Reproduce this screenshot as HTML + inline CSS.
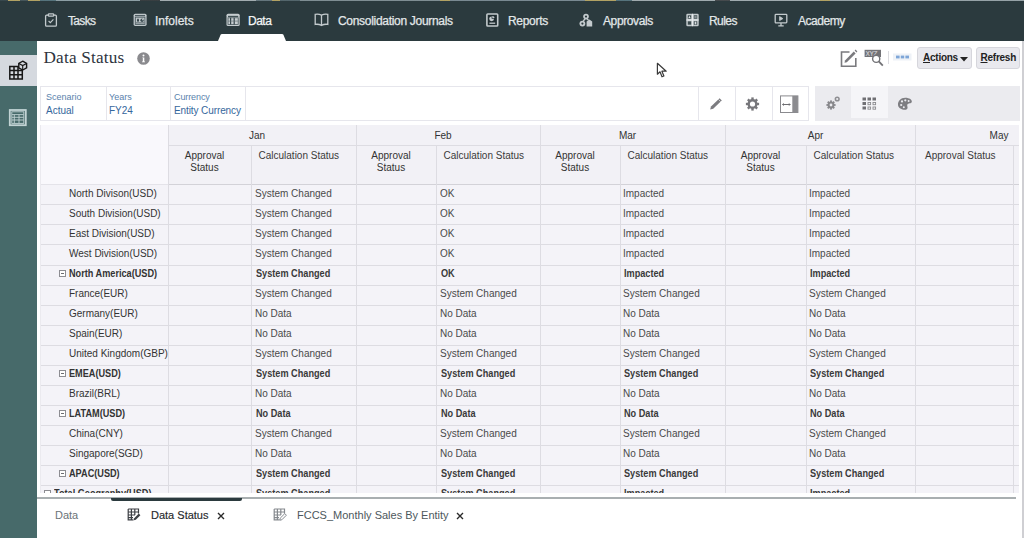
<!DOCTYPE html>
<html><head><meta charset="utf-8">
<style>
*{margin:0;padding:0;box-sizing:border-box}
html,body{width:1024px;height:538px;overflow:hidden;background:#fff;font-family:"Liberation Sans",sans-serif}
.abs{position:absolute}
#nav{left:0;top:0;width:1024px;height:41px;background:#2b3a3e}
#topstrip{left:0;top:0;width:1024px;height:1px;opacity:0.85;background:linear-gradient(90deg,#3a4a50 0,#3a4a50 8px,#c9b46a 8px,#c9b46a 20px,#4a5a60 20px,#4a5a60 28px,#c9b46a 28px,#c9b46a 40px,#5d7e88 40px,#5d7e88 56px,#9fb1b8 56px,#9fb1b8 140px,#3b3f42 140px,#3b3f42 160px,#b7c0c4 160px,#b7c0c4 256px,#6f8088 256px,#6f8088 272px,#c9b46a 272px,#c9b46a 280px,#5b6d74 280px,#5b6d74 300px,#8d9ca2 300px,#8d9ca2 440px,#c9b46a 440px,#c9b46a 450px,#8797a0 450px,#8797a0 585px,#c9b46a 585px,#c9b46a 616px,#5d7e88 616px,#5d7e88 632px,#b4bec2 632px,#b4bec2 715px,#4a4d50 715px,#4a4d50 730px,#b4bec2 730px,#b4bec2 820px,#c9b46a 820px,#c9b46a 830px,#a8b4b9 830px,#a8b4b9 1024px)}
.ni{position:absolute;top:1px;height:41px;color:#e3e8e9;-webkit-text-stroke:0.25px #e3e8e9;font-size:12px;letter-spacing:-0.3px;line-height:41px;white-space:nowrap}
#datatab{left:218px;top:34px;width:68px;height:7px}
#side{left:0;top:41px;width:37px;height:497px;background:#476a6a}
#sidesel{left:0;top:54.5px;width:37px;height:31.5px;background:#d5d9df}
#title{left:43.5px;top:48.1px;letter-spacing:0.2px;font-family:"Liberation Serif",serif;font-size:17.2px;color:#2e3440;white-space:nowrap}
#info{left:137px;top:52px;width:13px;height:13px;border-radius:50%;background:#8a8a8e}
#pov{left:40px;top:86px;width:769px;height:35px;border:1px solid #e6e6ec;background:#fff}
.pv{position:absolute;top:0;height:33px;border-right:1px solid #e6e6ec;font-size:10px;color:#35679c;padding:4px 0 0 4px;line-height:13px;white-space:nowrap}
.pv .l{color:#5a82ad;font-size:9px;line-height:12.5px}
.tb{position:absolute;top:0;height:33px;border-left:1px solid #e6e6ec}
#gray{left:815px;top:86px;width:205px;height:35px;background:#ebebef}
#graysel{left:851px;top:86px;width:37px;height:32px;background:#f5f5f8}
#grid{left:40px;top:125px;width:979px;height:368px;overflow:hidden;background:#f4f3f8}
.c{position:absolute;font-size:10px;color:#333;white-space:nowrap;line-height:12px}
.hl{position:absolute;background:#dddce2}
.b{font-weight:bold;transform:scaleX(0.915);transform-origin:0 50%}
.box{width:7px;height:7px;border:1px solid #8d8d92;background:#fff}
.box:after{content:"";position:absolute;left:1px;top:2px;width:3px;height:1px;background:#6d6d72}
.btn{background:#e9e9ee;border:1px solid #d6d6dc;border-radius:3px;font-size:10px;font-weight:bold;letter-spacing:-0.25px;color:#222;line-height:12px;white-space:nowrap}
.btn u{text-decoration:underline;text-underline-offset:1px}
#rb{left:1022px;top:41px;width:1.5px;height:497px;background:#cfcfd3}
#btm{left:37px;top:493px;width:985px;height:45px;background:#fff}
#btmline{left:37px;top:497px;width:979px;height:1.5px;background:#a9afb1}
#btmind{left:111px;top:497.5px;width:131px;height:3px;border-radius:0 0 2px 2px;background:#2b3a3e}
.bt{position:absolute;top:508px;font-size:11px;line-height:14px;white-space:nowrap;color:#2f3a3f}
</style></head><body>
<div id="nav" class="abs"></div>
<div id="topstrip" class="abs"></div>
<div class="ni" style="left:68px;letter-spacing:-0.65px">Tasks</div>
<div class="ni" style="left:155px;letter-spacing:0px">Infolets</div>
<div class="ni" style="left:248px;color:#fff;letter-spacing:-0.5px">Data</div>
<div class="ni" style="left:338px">Consolidation Journals</div>
<div class="ni" style="left:508px">Reports</div>
<div class="ni" style="left:603px;letter-spacing:-0.38px">Approvals</div>
<div class="ni" style="left:709px;letter-spacing:-0.57px">Rules</div>
<div class="ni" style="left:798px;letter-spacing:-0.47px">Academy</div>
<svg class="abs" style="left:44px;top:13px" width="14" height="14" viewBox="0 0 14 14" fill="none" stroke="#c3cacd" stroke-width="1.3"><rect x="1.6" y="2.2" width="10.8" height="11" rx="1"/><rect x="4.3" y="0.8" width="5.4" height="2.4" rx="0.8" fill="#2b3a3e"/><path d="M4.6 8 L6.3 9.6 L9.4 6.3" stroke-width="1.1"/></svg>
<svg class="abs" style="left:132.5px;top:13px" width="14" height="14" viewBox="0 0 14 14"><rect x="0.6" y="0.7" width="13" height="12.2" rx="1.6" fill="#bfc7ca"/><path d="M2 2.7 H12" stroke="#33434a" stroke-width="1"/><rect x="2.3" y="4.2" width="9.6" height="7.2" fill="none" stroke="#45555a" stroke-width="0.8"/><ellipse cx="5" cy="7.3" rx="0.9" ry="1.8" fill="#2e3e44"/><circle cx="9.1" cy="7.2" r="1.7" fill="#3a4a50"/><path d="M9.1 7.2 L10.8 7.2 A1.7 1.7 0 0 0 9.1 5.5 Z" fill="#bfc7ca"/><path d="M3 9.9 H11.2" stroke="#3a4a50" stroke-width="0.8"/></svg>
<svg class="abs" style="left:225.5px;top:13px" width="14" height="14" viewBox="0 0 14 14"><rect x="0.5" y="0.7" width="13.2" height="12.4" rx="1.6" fill="#c6cdd0"/><path d="M2 3.4 H12.2" stroke="#3a4a4e" stroke-width="1.1"/><rect x="2" y="4.8" width="10.2" height="6.6" fill="none" stroke="#4a595d" stroke-width="0.8"/><path d="M4.6 4.8 V11.4 M8.2 4.8 V11.4" stroke="#34444a" stroke-width="1.2"/><path d="M2 8.1 H12.2" stroke="#5a686c" stroke-width="0.6"/></svg>
<svg class="abs" style="left:314px;top:13px" width="15" height="14" viewBox="0 0 15 14" fill="none" stroke="#c3cacd" stroke-width="1.3"><path d="M7.5 12.4 V2.2 Q4.5 0.8 1.2 1.4 V11.4 Q4.5 10.8 7.5 12.4 Q10.5 10.8 13.8 11.4 V1.4 Q10.5 0.8 7.5 2.2"/></svg>
<svg class="abs" style="left:486px;top:13px" width="13" height="14" viewBox="0 0 13 14"><rect x="0.9" y="1" width="10.8" height="12" rx="0.8" fill="#1f2c30" stroke="#c3cacd" stroke-width="1.6"/><circle cx="5.6" cy="5.8" r="2.4" fill="#c3cacd"/><path d="M5.6 5.8 L5.6 3.4 A2.4 2.4 0 0 1 8 5.8 Z" fill="#1f2c30"/><path d="M6.3 5.1 L6.3 2.9 A2.3 2.3 0 0 1 8.6 5.1 Z" fill="#c3cacd"/><path d="M3.4 10.2 H9.2" stroke="#c3cacd" stroke-width="1.3"/></svg>
<svg class="abs" style="left:579px;top:13px" width="14" height="14" viewBox="0 0 14 14" fill="#c3cacd"><circle cx="7" cy="3.6" r="2.8"/><circle cx="3.4" cy="10.6" r="2.9"/><path d="M7.6 8.6 L10.4 6.6 L13.2 8.6 V13.4 H7.6 Z"/><path d="M6 6 L4.2 8 M8 6 L9.6 7.2" stroke="#c3cacd" stroke-width="1.4"/><circle cx="7" cy="3.6" r="1.1" fill="#2b3a3e"/><circle cx="3.4" cy="10.6" r="1.1" fill="#2b3a3e"/></svg>
<svg class="abs" style="left:686px;top:13px" width="13" height="14" viewBox="0 0 13 14"><rect x="0.3" y="0.8" width="12.4" height="12.4" rx="1.3" fill="#c3cacd"/><path d="M6.5 0.8 V13.2 M0.3 7 H12.7" stroke="#e8ecee" stroke-width="1"/><rect x="1.8" y="2.3" width="3.4" height="3.4" fill="#3b4a4e"/><rect x="7.8" y="2.3" width="3.4" height="3.4" fill="#3b4a4e"/><rect x="1.8" y="8.3" width="3.4" height="3.4" fill="#3b4a4e"/><rect x="7.8" y="8.3" width="3.4" height="3.4" fill="#3b4a4e"/><path d="M3.5 2.8 L4.6 5 H2.4 Z" fill="#e0e4e6"/><path d="M8.3 4 H10.7 M8.3 10 H10.7 M9.5 8.7 V11.3" stroke="#e0e4e6" stroke-width="0.9"/></svg>
<svg class="abs" style="left:774px;top:13px" width="14" height="14" viewBox="0 0 14 14" fill="none" stroke="#c3cacd" stroke-width="1.3"><rect x="1.2" y="1.3" width="11.6" height="8.6" rx="0.8"/><path d="M7 10 V12.2 M4.3 12.8 H9.7"/><path d="M5.6 3.6 L8.9 5.6 L5.6 7.6 Z" fill="#c3cacd" stroke-width="0.8"/></svg>
<svg id="datatab" class="abs" viewBox="0 0 68 7"><path d="M0 7 L2.6 0.8 Q3 0 4 0 L64 0 Q65 0 65.4 0.8 L68 7 Z" fill="#fff"/></svg>
<div id="side" class="abs"></div>
<div id="sidesel" class="abs"></div>
<svg class="abs" style="left:8px;top:60px" width="22" height="21" viewBox="0 0 22 21">
<g fill="none" stroke="#161616" stroke-width="1.5"><path d="M1.8 6.4 H10 V10.6 H14.3 V19 H1.8 Z M1.8 10.6 H10 M1.8 14.8 H14.3 M6 6.4 V19 M10 10.6 V19"/></g>
<g fill="none" stroke="#161616" stroke-width="1.4"><path d="M14.7 1.2 L18.6 3.4 V7.8 L14.7 10 L10.8 7.8 V3.4 Z"/><path d="M10.8 3.4 L14.7 5.6 L18.6 3.4 M14.7 5.6 V10" stroke-width="1.1"/></g>
</svg>
<svg class="abs" style="left:8px;top:107.5px" width="20" height="20" viewBox="0 0 20 20" fill="none" stroke="#c2d3d4">
<rect x="1.8" y="2" width="16" height="15.2" stroke-width="1.8"/><rect x="3.8" y="3.8" width="12" height="11.6" stroke-width="0.9"/><path d="M4 6.6 H15.6 M4 9.3 H15.6 M4 12 H15.6 M6.3 6.6 V15 M11 6.6 V15" stroke-width="0.9"/>
</svg>
<div id="title" class="abs">Data Status</div>
<svg class="abs" style="left:137px;top:52px" width="13" height="13" viewBox="0 0 13 13"><circle cx="6.5" cy="6.5" r="6.3" fill="#8a8a8e"/><circle cx="6.5" cy="3.6" r="1" fill="#fff"/><path d="M5.4 5.4 H7.3 V9.6 H8 V10.3 H5 V9.6 H5.8 V6.1 H5.4 Z" fill="#fff"/></svg>
<svg class="abs" style="left:840px;top:49px" width="18" height="19" viewBox="0 0 18 19"><path d="M9.5 3 H1.5 V17.3 H15.8 V9" fill="none" stroke="#7a7a7e" stroke-width="1.6"/><path d="M4.5 13.8 L5 11.4 L13.8 2.6 L15.6 4.4 L6.8 13.2 Z" fill="#7a7a7e"/><path d="M14.6 1.6 L15.6 0.6 L17.4 2.4 L16.4 3.4 Z" fill="#7a7a7e"/></svg>
<svg class="abs" style="left:864px;top:49px" width="21" height="19" viewBox="0 0 21 19"><rect x="0.6" y="0.8" width="16.4" height="7.2" fill="#727276"/><text x="1.4" y="6.9" font-family="Liberation Sans" font-size="6.6" font-weight="bold" fill="#c4c4c8" letter-spacing="-0.3">XYZ</text><circle cx="12.2" cy="9.8" r="3.6" fill="#fff" stroke="#727276" stroke-width="1.4"/><path d="M14.8 12.4 L18.8 16.6" stroke="#727276" stroke-width="1.8"/></svg>
<div class="abs" style="left:888px;top:51px;width:1px;height:13px;background:#dcdce0"></div>
<svg class="abs" style="left:893px;top:53px" width="19" height="8" viewBox="0 0 19 8"><rect x="0" y="0.5" width="18.5" height="7" fill="#eef2f7"/><g fill="#7ea6d8"><rect x="3" y="2.6" width="3.6" height="2.8"/><rect x="7.8" y="2.6" width="3.4" height="2.8"/><rect x="12.4" y="2.6" width="3.6" height="2.8"/></g></svg>
<div class="abs btn" style="left:917px;top:47px;width:55px;height:22px"><span style="position:absolute;left:5px;top:4px"><u>A</u>ctions</span><svg style="position:absolute;left:42px;top:9px" width="8" height="5" viewBox="0 0 8 5"><path d="M0 0 H8 L4 4.5 Z" fill="#222"/></svg></div>
<div class="abs btn" style="left:976px;top:47px;width:44px;height:22px"><span style="position:absolute;left:3.5px;top:4px"><u>R</u>efresh</span></div>
<div id="pov" class="abs">
  <div class="pv" style="left:0;width:66px;padding-left:5px"><div class="l">Scenario</div>Actual</div>
  <div class="pv" style="left:66px;width:64px;padding-left:2px"><div class="l">Years</div>FY24</div>
  <div class="pv" style="left:130px;width:75px;padding-left:3px;letter-spacing:-0.1px"><div class="l">Currency</div>Entity Currency</div>
  <div class="tb" style="left:657px;width:37px"></div>
  <div class="tb" style="left:694px;width:37px"></div>
  <div class="tb" style="left:731px;width:37px"></div>
</div>
<div id="gray" class="abs"></div>
<div id="graysel" class="abs"></div>
<svg class="abs" style="left:708px;top:97px" width="15" height="14" viewBox="0 0 15 14"><path d="M2.2 12.4 L3 9.6 L11.6 1.2 L13.8 3.4 L5.2 11.8 Z" fill="#7c7c80"/><path d="M10.4 2.4 L12.6 4.6" stroke="#fff" stroke-width="0.6"/></svg>
<svg class="abs" style="left:745px;top:97px" width="15" height="14" viewBox="0 0 15 14"><g transform="translate(7.5 7)" fill="#77777b"><circle r="5"/><rect x="-1.2" y="-6.6" width="2.4" height="13.2"/><rect x="-1.2" y="-6.6" width="2.4" height="13.2" transform="rotate(45)"/><rect x="-1.2" y="-6.6" width="2.4" height="13.2" transform="rotate(90)"/><rect x="-1.2" y="-6.6" width="2.4" height="13.2" transform="rotate(135)"/><circle r="2.6" fill="#fff"/></g></svg>
<svg class="abs" style="left:779px;top:95px" width="20" height="19" viewBox="0 0 20 19"><rect x="1.5" y="0.9" width="17.4" height="16.6" fill="#fff" stroke="#8a8a8e" stroke-width="1"/><rect x="13.3" y="0.9" width="5.6" height="16.6" fill="#8c8c90"/><path d="M3.4 9.5 H11.4" stroke="#6e6e72" stroke-width="1"/><path d="M3.2 9.5 L5 8 V11 Z M11.6 9.5 L9.8 8 V11 Z" fill="#6e6e72"/></svg>
<svg class="abs" style="left:824px;top:95px" width="18" height="16" viewBox="0 0 18 16"><g transform="translate(7 10)" fill="#88888c"><circle r="3.4"/><rect x="-0.9" y="-4.6" width="1.8" height="9.2"/><rect x="-0.9" y="-4.6" width="1.8" height="9.2" transform="rotate(45)"/><rect x="-0.9" y="-4.6" width="1.8" height="9.2" transform="rotate(90)"/><rect x="-0.9" y="-4.6" width="1.8" height="9.2" transform="rotate(135)"/><circle r="1.4" fill="#ebebef"/></g><g transform="translate(13.2 4)" fill="#8e8e92"><circle r="2.6"/><circle r="1.1" fill="#ebebef"/></g></svg>
<svg class="abs" style="left:861px;top:96px" width="17" height="15" viewBox="0 0 17 15"><g fill="#707074"><rect x="1.5" y="1.5" width="3.5" height="3"/><rect x="6.5" y="1.5" width="3.5" height="3"/><rect x="11.5" y="1.5" width="3.5" height="3"/><rect x="1.5" y="6" width="3.5" height="3"/><rect x="1.5" y="10.5" width="3.5" height="3"/></g><g fill="none" stroke="#8a8a8e" stroke-width="0.9"><rect x="7" y="6.5" width="2.6" height="2.2"/><rect x="12" y="6.5" width="2.6" height="2.2"/><rect x="7" y="11" width="2.6" height="2.2"/><rect x="12" y="11" width="2.6" height="2.2"/></g></svg>
<svg class="abs" style="left:897px;top:97px" width="16" height="14" viewBox="0 0 16 14"><path d="M8.2 0.8 C12.5 0.8 15.3 3 14.8 5 C14.3 6.7 11.2 6 10.4 7.4 C9.6 8.8 11.6 10.5 9.8 12.2 C8 13.6 1.4 12.4 1 8 C0.7 4.2 3.8 0.8 8.2 0.8 Z" fill="#7e7e82"/><g fill="#ebebef"><circle cx="4.2" cy="8" r="1.1"/><circle cx="5" cy="4.4" r="1.1"/><circle cx="8.3" cy="3.3" r="1.1"/><circle cx="11.6" cy="4" r="1"/><circle cx="6.8" cy="10.3" r="1"/></g></svg>
<div id="grid" class="abs">
<div class="abs" style="left:0;top:0;width:981px;height:59px;background:#f2f1f6"></div>
<div class="abs" style="left:0;top:0;width:128px;height:59px;background:#f9f8fc"></div>
<div class="hl" style="left:128px;top:20px;width:853px;height:1px"></div>
<div class="hl" style="left:128px;top:59px;width:853px;height:1px;background:#d3d2d8"></div>
<div class="hl" style="left:0;top:59px;width:128px;height:1px;background:#e4e3e9"></div>
<div class="hl" style="left:0;top:79px;width:981px;height:1px"></div>
<div class="hl" style="left:0;top:99px;width:981px;height:1px"></div>
<div class="hl" style="left:0;top:119px;width:981px;height:1px"></div>
<div class="hl" style="left:0;top:140px;width:981px;height:1px"></div>
<div class="hl" style="left:0;top:160px;width:981px;height:1px"></div>
<div class="hl" style="left:0;top:180px;width:981px;height:1px"></div>
<div class="hl" style="left:0;top:200px;width:981px;height:1px"></div>
<div class="hl" style="left:0;top:220px;width:981px;height:1px"></div>
<div class="hl" style="left:0;top:240px;width:981px;height:1px"></div>
<div class="hl" style="left:0;top:260px;width:981px;height:1px"></div>
<div class="hl" style="left:0;top:280px;width:981px;height:1px"></div>
<div class="hl" style="left:0;top:300px;width:981px;height:1px"></div>
<div class="hl" style="left:0;top:320px;width:981px;height:1px"></div>
<div class="hl" style="left:0;top:340px;width:981px;height:1px"></div>
<div class="hl" style="left:0;top:360px;width:981px;height:1px"></div>
<div class="hl" style="left:0;top:380px;width:981px;height:1px"></div>
<div class="hl" style="left:128px;top:0px;width:1px;height:368px"></div>
<div class="hl" style="left:211px;top:20px;width:1px;height:368px"></div>
<div class="hl" style="left:316px;top:0px;width:1px;height:368px"></div>
<div class="hl" style="left:396px;top:20px;width:1px;height:368px"></div>
<div class="hl" style="left:500px;top:0px;width:1px;height:368px"></div>
<div class="hl" style="left:580px;top:20px;width:1px;height:368px"></div>
<div class="hl" style="left:685px;top:0px;width:1px;height:368px"></div>
<div class="hl" style="left:766px;top:20px;width:1px;height:368px"></div>
<div class="hl" style="left:875px;top:0px;width:1px;height:368px"></div>
<div class="hl" style="left:973px;top:20px;width:1px;height:368px"></div>
<div class="hl" style="left:0;top:0;width:1px;height:368px;background:#ebeaef"></div>
<div class="c" style="left:187.0px;width:60px;text-align:center;top:4.5px">Jan</div>
<div class="c" style="left:373.0px;width:60px;text-align:center;top:4.5px">Feb</div>
<div class="c" style="left:557.5px;width:60px;text-align:center;top:4.5px">Mar</div>
<div class="c" style="left:745.5px;width:60px;text-align:center;top:4.5px">Apr</div>
<div class="c" style="left:929px;width:60px;text-align:center;top:4.5px">May</div>
<div class="c" style="left:134.5px;width:60px;text-align:center;top:24.5px;line-height:12.7px">Approval<br>Status</div>
<div class="c" style="left:218.5px;top:25px;color:#3a3a3a">Calculation Status</div>
<div class="c" style="left:321.0px;width:60px;text-align:center;top:24.5px;line-height:12.7px">Approval<br>Status</div>
<div class="c" style="left:403.5px;top:25px;color:#3a3a3a">Calculation Status</div>
<div class="c" style="left:505.0px;width:60px;text-align:center;top:24.5px;line-height:12.7px">Approval<br>Status</div>
<div class="c" style="left:587.5px;top:25px;color:#3a3a3a">Calculation Status</div>
<div class="c" style="left:690.5px;width:60px;text-align:center;top:24.5px;line-height:12.7px">Approval<br>Status</div>
<div class="c" style="left:773.5px;top:25px;color:#3a3a3a">Calculation Status</div>
<div class="c" style="left:885px;top:25px;color:#3a3a3a">Approval Status</div>
<div class="c" style="left:29px;top:63px">North Divison(USD)</div>
<div class="c" style="left:215px;top:63px;color:#4a4a4a">System Changed</div>
<div class="c" style="left:400px;top:63px;color:#4a4a4a">OK</div>
<div class="c" style="left:583px;top:63px;color:#4a4a4a">Impacted</div>
<div class="c" style="left:769px;top:63px;color:#4a4a4a">Impacted</div>
<div class="c" style="left:29px;top:83px">South Division(USD)</div>
<div class="c" style="left:215px;top:83px;color:#4a4a4a">System Changed</div>
<div class="c" style="left:400px;top:83px;color:#4a4a4a">OK</div>
<div class="c" style="left:583px;top:83px;color:#4a4a4a">Impacted</div>
<div class="c" style="left:769px;top:83px;color:#4a4a4a">Impacted</div>
<div class="c" style="left:29px;top:103px">East Division(USD)</div>
<div class="c" style="left:215px;top:103px;color:#4a4a4a">System Changed</div>
<div class="c" style="left:400px;top:103px;color:#4a4a4a">OK</div>
<div class="c" style="left:583px;top:103px;color:#4a4a4a">Impacted</div>
<div class="c" style="left:769px;top:103px;color:#4a4a4a">Impacted</div>
<div class="c" style="left:29px;top:123px">West Division(USD)</div>
<div class="c" style="left:215px;top:123px;color:#4a4a4a">System Changed</div>
<div class="c" style="left:400px;top:123px;color:#4a4a4a">OK</div>
<div class="c" style="left:583px;top:123px;color:#4a4a4a">Impacted</div>
<div class="c" style="left:769px;top:123px;color:#4a4a4a">Impacted</div>
<div class="abs box" style="left:19px;top:145px"></div>
<div class="c b" style="left:29px;top:143px">North America(USD)</div>
<div class="c b" style="left:216px;top:143px;color:#3a3a3a">System Changed</div>
<div class="c b" style="left:401px;top:143px;color:#3a3a3a">OK</div>
<div class="c b" style="left:584px;top:143px;color:#3a3a3a">Impacted</div>
<div class="c b" style="left:770px;top:143px;color:#3a3a3a">Impacted</div>
<div class="c" style="left:29px;top:163px">France(EUR)</div>
<div class="c" style="left:215px;top:163px;color:#4a4a4a">System Changed</div>
<div class="c" style="left:400px;top:163px;color:#4a4a4a">System Changed</div>
<div class="c" style="left:583px;top:163px;color:#4a4a4a">System Changed</div>
<div class="c" style="left:769px;top:163px;color:#4a4a4a">System Changed</div>
<div class="c" style="left:29px;top:183px">Germany(EUR)</div>
<div class="c" style="left:215px;top:183px;color:#4a4a4a">No Data</div>
<div class="c" style="left:400px;top:183px;color:#4a4a4a">No Data</div>
<div class="c" style="left:583px;top:183px;color:#4a4a4a">No Data</div>
<div class="c" style="left:769px;top:183px;color:#4a4a4a">No Data</div>
<div class="c" style="left:29px;top:203px">Spain(EUR)</div>
<div class="c" style="left:215px;top:203px;color:#4a4a4a">No Data</div>
<div class="c" style="left:400px;top:203px;color:#4a4a4a">No Data</div>
<div class="c" style="left:583px;top:203px;color:#4a4a4a">No Data</div>
<div class="c" style="left:769px;top:203px;color:#4a4a4a">No Data</div>
<div class="c" style="left:29px;top:223px">United Kingdom(GBP)</div>
<div class="c" style="left:215px;top:223px;color:#4a4a4a">System Changed</div>
<div class="c" style="left:400px;top:223px;color:#4a4a4a">System Changed</div>
<div class="c" style="left:583px;top:223px;color:#4a4a4a">System Changed</div>
<div class="c" style="left:769px;top:223px;color:#4a4a4a">System Changed</div>
<div class="abs box" style="left:19px;top:245px"></div>
<div class="c b" style="left:29px;top:243px">EMEA(USD)</div>
<div class="c b" style="left:216px;top:243px;color:#3a3a3a">System Changed</div>
<div class="c b" style="left:401px;top:243px;color:#3a3a3a">System Changed</div>
<div class="c b" style="left:584px;top:243px;color:#3a3a3a">System Changed</div>
<div class="c b" style="left:770px;top:243px;color:#3a3a3a">System Changed</div>
<div class="c" style="left:29px;top:263px">Brazil(BRL)</div>
<div class="c" style="left:215px;top:263px;color:#4a4a4a">No Data</div>
<div class="c" style="left:400px;top:263px;color:#4a4a4a">No Data</div>
<div class="c" style="left:583px;top:263px;color:#4a4a4a">No Data</div>
<div class="c" style="left:769px;top:263px;color:#4a4a4a">No Data</div>
<div class="abs box" style="left:19px;top:285px"></div>
<div class="c b" style="left:29px;top:283px">LATAM(USD)</div>
<div class="c b" style="left:216px;top:283px;color:#3a3a3a">No Data</div>
<div class="c b" style="left:401px;top:283px;color:#3a3a3a">No Data</div>
<div class="c b" style="left:584px;top:283px;color:#3a3a3a">No Data</div>
<div class="c b" style="left:770px;top:283px;color:#3a3a3a">No Data</div>
<div class="c" style="left:29px;top:303px">China(CNY)</div>
<div class="c" style="left:215px;top:303px;color:#4a4a4a">System Changed</div>
<div class="c" style="left:400px;top:303px;color:#4a4a4a">System Changed</div>
<div class="c" style="left:583px;top:303px;color:#4a4a4a">System Changed</div>
<div class="c" style="left:769px;top:303px;color:#4a4a4a">System Changed</div>
<div class="c" style="left:29px;top:323px">Singapore(SGD)</div>
<div class="c" style="left:215px;top:323px;color:#4a4a4a">No Data</div>
<div class="c" style="left:400px;top:323px;color:#4a4a4a">No Data</div>
<div class="c" style="left:583px;top:323px;color:#4a4a4a">No Data</div>
<div class="c" style="left:769px;top:323px;color:#4a4a4a">No Data</div>
<div class="abs box" style="left:19px;top:345px"></div>
<div class="c b" style="left:29px;top:343px">APAC(USD)</div>
<div class="c b" style="left:216px;top:343px;color:#3a3a3a">System Changed</div>
<div class="c b" style="left:401px;top:343px;color:#3a3a3a">System Changed</div>
<div class="c b" style="left:584px;top:343px;color:#3a3a3a">System Changed</div>
<div class="c b" style="left:770px;top:343px;color:#3a3a3a">System Changed</div>
<div class="abs box" style="left:4px;top:365px"></div>
<div class="c b" style="left:14px;top:363px">Total Geography(USD)</div>
<div class="c b" style="left:216px;top:363px;color:#3a3a3a">System Changed</div>
<div class="c b" style="left:401px;top:363px;color:#3a3a3a">System Changed</div>
<div class="c b" style="left:584px;top:363px;color:#3a3a3a">Impacted</div>
<div class="c b" style="left:770px;top:363px;color:#3a3a3a">Impacted</div>
</div>
<div id="btm" class="abs"></div>
<div id="btmline" class="abs"></div>
<div id="btmind" class="abs"></div>
<div class="bt" style="left:55px;color:#6b7378">Data</div>
<div class="bt" style="left:151px;color:#26292c;-webkit-text-stroke:0.15px #26292c">Data Status</div>
<div class="bt" style="left:297px;color:#4d575c">FCCS_Monthly Sales By Entity</div>
<svg class="abs" style="left:127px;top:508px" width="14" height="13" viewBox="0 0 14 13"><g fill="none" stroke="#3c3f44" stroke-width="1.2"><path d="M1.2 1 H11.5 V5.5 M1.2 1 V11.8 H6.5 M1.2 4 H11 M1.2 7 H8 M1.2 9.6 H6 M4.4 1 V11.8 M7.8 1 V7"/></g><path d="M6.8 12.2 L7.2 10.2 L11.8 5.6 L13.4 7.2 L8.8 11.8 Z" fill="#3c3f44"/></svg>
<svg class="abs" style="left:273px;top:508px" width="14" height="13" viewBox="0 0 14 13"><g fill="none" stroke="#85898e" stroke-width="1.2"><path d="M1.2 1 H11.5 V5.5 M1.2 1 V11.8 H6.5 M1.2 4 H11 M1.2 7 H8 M1.2 9.6 H6 M4.4 1 V11.8 M7.8 1 V7"/></g><path d="M6.8 12.2 L7.2 10.2 L11.8 5.6 L13.4 7.2 L8.8 11.8 Z" fill="none" stroke="#85898e" stroke-width="1"/></svg>
<svg class="abs" style="left:217px;top:511.5px" width="8" height="8" viewBox="0 0 8 8"><path d="M1 1 L7 7 M7 1 L1 7" stroke="#2a2a2a" stroke-width="1.4"/></svg>
<svg class="abs" style="left:456px;top:511.5px" width="8" height="8" viewBox="0 0 8 8"><path d="M1 1 L7 7 M7 1 L1 7" stroke="#2a2a2a" stroke-width="1.4"/></svg>
<div id="rb" class="abs"></div>
<svg class="abs" style="left:656px;top:62px" width="12" height="17" viewBox="0 0 12 17"><path d="M1.4 1.3 L1.4 12.2 L4 9.8 L6 14.8 L7.9 14 L5.9 9.2 L10.2 9.2 Z" fill="#fff" stroke="#3a3a3a" stroke-width="1.2" stroke-linejoin="round"/></svg>
</body></html>
